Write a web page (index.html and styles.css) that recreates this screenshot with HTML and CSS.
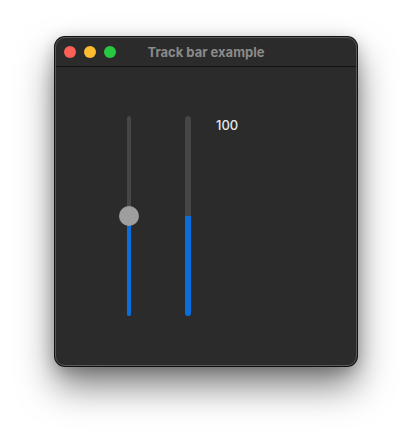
FILE: index.html
```html
<!DOCTYPE html>
<html>
<head>
<meta charset="utf-8">
<link rel="stylesheet" href="styles.css">
</head>
<body>
<div class="window">
  <div class="titlebar">
    <div class="lights">
      <span class="light red"></span>
      <span class="light yellow"></span>
      <span class="light green"></span>
    </div>
    <div class="title">Track bar example</div>
  </div>
  <div class="content">
    <div class="slider">
      <div class="track thin">
        <div class="fill" style="height: 50%"></div>
        <div class="knob" style="bottom: 50%"></div>
      </div>
    </div>
    <div class="slider narrow">
      <div class="track thick">
        <div class="fill" style="height: 50%"></div>
      </div>
    </div>
    <div class="value">100</div>
  </div>
</div>
</body>
</html>
```
FILE: styles.css
```css
html, body {
  margin: 0;
  padding: 0;
  background: #ffffff;
}
html {
  height: 440px;
}
body {
  box-sizing: border-box;
  height: 440px;
  padding: 37px 0 0 55px;
  font-family: "Inter", "Liberation Sans", sans-serif;
}
.window {
  width: 300px;
  height: 327px;
  background: #2b2b2b;
  border: 1px solid #595959;
  border-radius: 10px;
  box-shadow: 0 0 0 1px #111, 0 20px 36px rgba(0,0,0,0.5), 0 4px 16px rgba(0,0,0,0.25);
  overflow: hidden;
}
.titlebar {
  height: 28px;
  border-bottom: 1px solid #121212;
  position: relative;
  display: flex;
  align-items: center;
  justify-content: center;
}
.lights {
  position: absolute;
  left: 8px;
  top: 8px;
  display: flex;
  gap: 8px;
}
.light {
  width: 12px;
  height: 12px;
  border-radius: 50%;
}
.red { background: #fe5f57; }
.yellow { background: #febc2e; }
.green { background: #28c840; }
.title {
  font-size: 13px;
  font-weight: 700;
  color: #8a8a8a;
}
.content {
  display: flex;
  align-items: flex-start;
  padding: 49px 0 0 63px;
}
.slider {
  width: 20px;
  display: flex;
  justify-content: center;
}
.slider.narrow {
  width: 6px;
  margin-left: 46px;
}
.track {
  position: relative;
  height: 200px;
  background: #464646;
  display: flex;
  flex-direction: column;
  justify-content: flex-end;
}
.track.thin {
  width: 4px;
  border-radius: 2px;
}
.track.thick {
  width: 6px;
  border-radius: 3px;
}
.fill {
  background: #0a6fdc;
  border-radius: 0 0 3px 3px;
}
.knob {
  position: absolute;
  left: 50%;
  width: 20px;
  height: 20px;
  margin-left: -10px;
  margin-bottom: -10px;
  border-radius: 50%;
  background: #9e9e9e;
}
.value {
  margin-left: 25px;
  margin-top: 1px;
  font-size: 13px;
  font-weight: 500;
  color: #e8e8e8;
}
```
